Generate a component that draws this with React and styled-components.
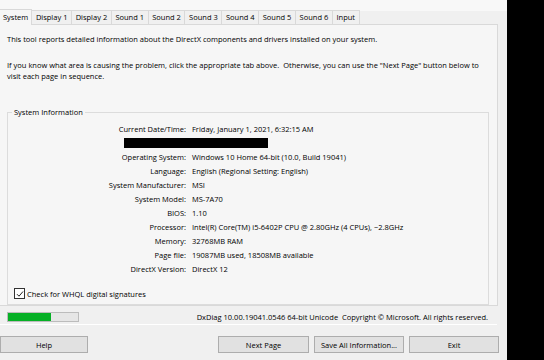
import { createGlobalStyle } from 'styled-components';
import styled from 'styled-components';

const GlobalStyle = createGlobalStyle`
  html, body {
    margin: 0;
    padding: 0;
    background: #000;
  }
  body {
    font-family: "Open Sans", "Liberation Sans", Arial, sans-serif;
    font-size: 7.5px;
    color: #000;
  }
`;

const Screen = styled.div`
  display: flex;
  width: 544px;
  height: 360px;
  overflow: hidden;
`;

const Dialog = styled.div`
  width: 507px;
  height: 360px;
  background: #f0f0f0;
  display: flex;
  flex-direction: column;
`;

const TopStrip = styled.div`
  height: 11px;
  background: #f8f8f8;
`;

const TabStrip = styled.div`
  display: flex;
  align-items: flex-end;
  height: 14px;
`;

const Tab = styled.div`
  height: ${(p) => (p.$active ? 15 : 13)}px;
  line-height: ${(p) => (p.$active ? 14 : 13)}px;
  padding: 0 ${(p) => (p.$active ? 3 : 3.6)}px;
  background: ${(p) => (p.$active ? '#f6f6f6' : '#f0f0f0')};
  border: 1px solid #d9d9d9;
  border-bottom: ${(p) => (p.$active ? 'none' : '1px solid #d9d9d9')};
  border-left: ${(p) => (p.$first ? 'none' : '1px solid #d9d9d9')};
  margin-left: -1px;
  position: relative;
  z-index: ${(p) => (p.$active ? 1 : 0)};
  white-space: nowrap;
  &:first-child {
    margin-left: 0;
  }
`;

const Panel = styled.div`
  width: 498px;
  height: 282px;
  box-sizing: border-box;
  background: #f6f6f6;
  border-top: 1px solid #d9d9d9;
  border-right: 1px solid #d9d9d9;
  border-bottom: 1px solid #d9d9d9;
  margin-top: -1px;
  padding: 9px 0 0 7px;
  display: flex;
  flex-direction: column;
`;

const Para = styled.p`
  margin: 0;
  line-height: 11px;
  white-space: pre;
  & + & {
    margin-top: 15px;
  }
`;

const GroupBox = styled.div`
  position: relative;
  margin-top: 30px;
  width: 482px;
  height: 194px;
  box-sizing: border-box;
  border: 1px solid #dcdcdc;
  padding-top: 9px;
  display: flex;
  flex-direction: column;
`;

const Legend = styled.span`
  position: absolute;
  top: -6px;
  left: 4px;
  padding: 0 2px;
  line-height: 10px;
  background: #f6f6f6;
`;

const InfoGrid = styled.div`
  display: grid;
  grid-template-columns: 178px auto;
  column-gap: 6px;
  grid-auto-rows: 14px;
  align-items: center;
`;

const Label = styled.div`
  text-align: right;
  white-space: nowrap;
`;

const Value = styled.div`
  white-space: nowrap;
`;

const Redaction = styled.div`
  grid-column: 1 / -1;
  margin-left: 116px;
  width: 144px;
  height: 10px;
  background: #000;
`;

const CheckRow = styled.label`
  display: flex;
  align-items: center;
  gap: 2px;
  margin: 12px 0 0 6px;
`;

const CheckBox = styled.span`
  width: 9px;
  height: 9px;
  border: 1px solid #333;
  background: #fff;
  display: flex;
  align-items: center;
  justify-content: center;
`;

const StatusRow = styled.div`
  display: flex;
  align-items: center;
  justify-content: space-between;
  height: 11px;
  margin: 5px 19px 0 7px;
`;

const Progress = styled.div`
  width: 72px;
  height: 10px;
  box-sizing: border-box;
  border: 1px solid #bcbcbc;
  background: #e6e6e6;
`;

const ProgressFill = styled.div`
  height: 100%;
  background: #06b025;
`;

const Version = styled.span`
  white-space: pre;
`;

const Separator = styled.div`
  width: 497px;
  height: 1px;
  background: #ffffff;
  margin-top: 2px;
`;

const ButtonRow = styled.div`
  display: flex;
  margin-top: 11px;
  width: 499px;
`;

const Button = styled.button`
  width: ${(p) => p.$w}px;
  height: 17px;
  margin-left: ${(p) => p.$gap || 0}px;
  box-sizing: border-box;
  border: 1px solid #adadad;
  background: #e1e1e1;
  font-family: inherit;
  font-size: inherit;
  color: #000;
  padding: 0;
`;

const Blackout = styled.div`
  flex: 1;
  background: #000;
`;

const tabs = ['System', 'Display 1', 'Display 2', 'Sound 1', 'Sound 2', 'Sound 3', 'Sound 4', 'Sound 5', 'Sound 6', 'Input'];

const rows = [
  ['Current Date/Time:', 'Friday, January 1, 2021, 6:32:15 AM'],
  null,
  ['Operating System:', 'Windows 10 Home 64-bit (10.0, Build 19041)'],
  ['Language:', 'English (Regional Setting: English)'],
  ['System Manufacturer:', 'MSI'],
  ['System Model:', 'MS-7A70'],
  ['BIOS:', '1.10'],
  ['Processor:', 'Intel(R) Core(TM) i5-6402P CPU @ 2.80GHz (4 CPUs), ~2.8GHz'],
  ['Memory:', '32768MB RAM'],
  ['Page file:', '19087MB used, 18508MB available'],
  ['DirectX Version:', 'DirectX 12'],
];

const App = () => {
  return (
    <>
      <GlobalStyle />
      <Screen>
        <Dialog>
          <TopStrip />
          <TabStrip>
            {tabs.map((t, i) => (
              <Tab key={t} $active={i === 0} $first={i === 0}>
                {t}
              </Tab>
            ))}
          </TabStrip>
          <Panel>
            <Para>This tool reports detailed information about the DirectX components and drivers installed on your system.</Para>
            <Para>
              {'If you know what area is causing the problem, click the appropriate tab above.  Otherwise, you can use the "Next Page" button below to\nvisit each page in sequence.'}
            </Para>
            <GroupBox>
              <Legend>System Information</Legend>
              <InfoGrid>
                {rows.map((r, i) =>
                  r ? (
                    [<Label key={`l${i}`}>{r[0]}</Label>, <Value key={`v${i}`}>{r[1]}</Value>]
                  ) : (
                    <Redaction key="redact" />
                  )
                )}
              </InfoGrid>
              <CheckRow>
                <CheckBox>
                  <svg width="8" height="8" viewBox="0 0 8 8">
                    <path d="M1 4.2 L3 6.2 L7 1.5" fill="none" stroke="#222" strokeWidth="1" />
                  </svg>
                </CheckBox>
                Check for WHQL digital signatures
              </CheckRow>
            </GroupBox>
          </Panel>
          <StatusRow>
            <Progress>
              <ProgressFill style={{ width: '62%' }} />
            </Progress>
            <Version>DxDiag 10.00.19041.0546 64-bit Unicode  Copyright © Microsoft. All rights reserved.</Version>
          </StatusRow>
          <Separator />
          <ButtonRow>
            <Button $w={88}>Help</Button>
            <Button $w={91} $gap={130}>Next Page</Button>
            <Button $w={90} $gap={5}>Save All Information...</Button>
            <Button $w={90} $gap={5}>Exit</Button>
          </ButtonRow>
        </Dialog>
        <Blackout />
      </Screen>
    </>
  );
};

export default App;
